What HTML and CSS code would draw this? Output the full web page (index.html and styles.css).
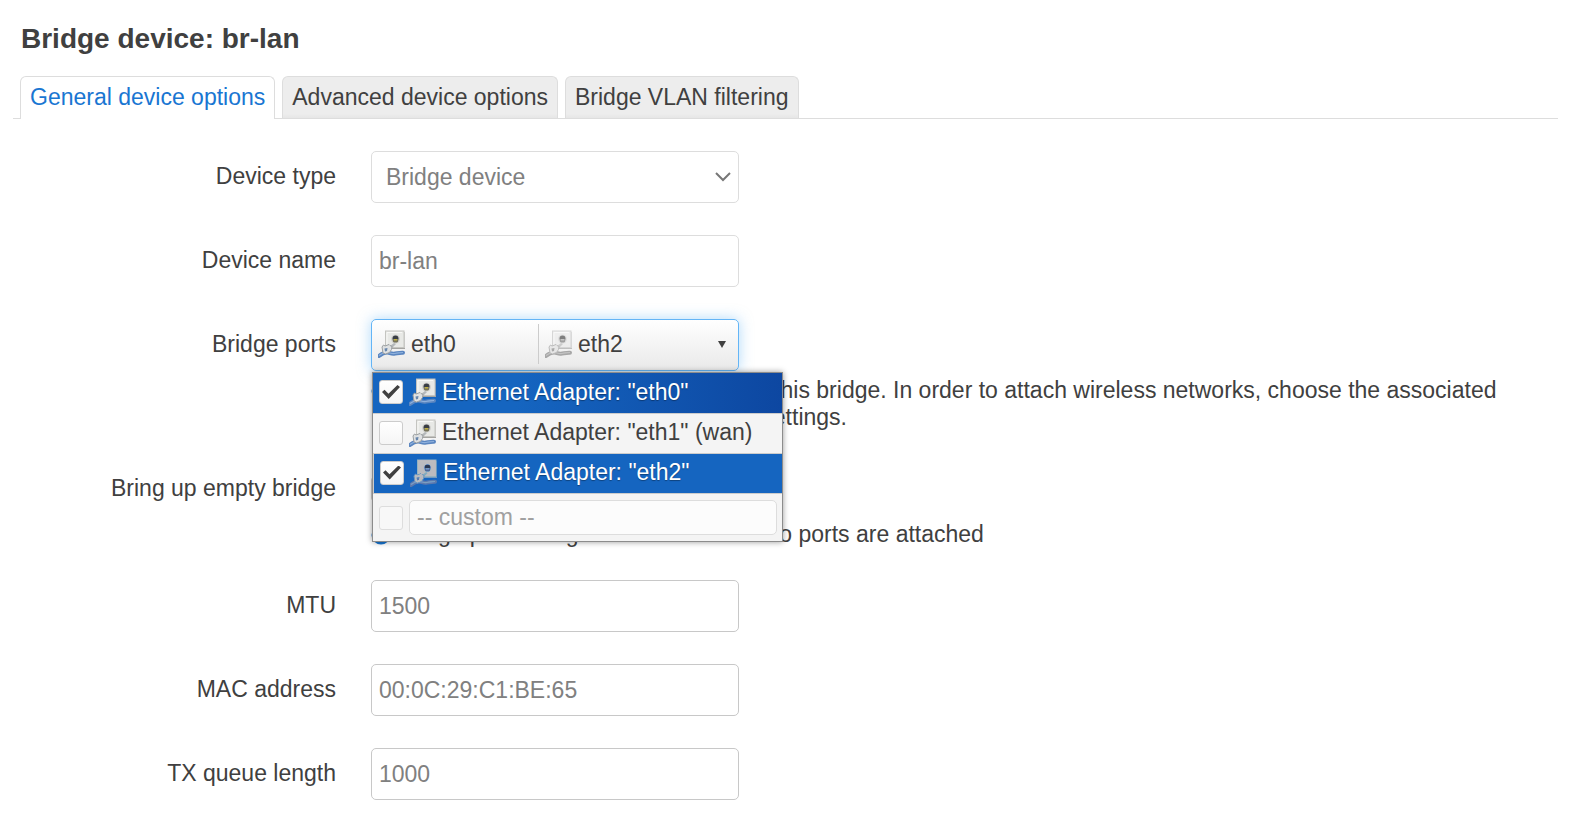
FILE: index.html
```html
<!DOCTYPE html>
<html lang="en">
<head>
<meta charset="utf-8">
<title>Bridge device: br-lan</title>
<link rel="stylesheet" href="styles.css">
</head>
<body>
<svg class="sprites" aria-hidden="true">
  <symbol id="port" viewBox="0 0 27 28">
    <path d="M8 18.500h19V2" fill="none" stroke="#a5a5a2"/>
    <rect x="7.500" y="1" width="18.500" height="16.500" fill="#e8e9e6" stroke="#c4c4c0"/>
    <path d="M9 15.500V2.500h15" fill="none" stroke="#f8f8f6"/>
    <circle cx="17.500" cy="9" r="4.500" fill="#d2d2cf"/>
    <path d="M14.500 8.500a3 3 0 0 1 6 0v1h-6z" fill="#3a3e44"/>
    <path d="M14.500 9.500h6l-.5 2-1 1h-3l-1-1z" fill="#77745a"/>
    <path d="M16 9h3v1.500h-3z" fill="#c0b040"/>
    <path d="M1 26c2.500-2 5-3.500 8-3.500s3.500 1.500 7 1.200c3-.3 5-1.200 9-1" fill="none" stroke="#5b86c0" stroke-width="4" stroke-linecap="round"/>
    <path d="M1 25.500c3-2.500 5-3 8-3s4 1.500 8 1 5-1 8-1" fill="none" stroke="#8fb1dc" stroke-width="1.200"/>
    <path d="M12 16l4-3 2 1-4 4z" fill="#b4b8ba"/>
    <path d="M4 17l1.500-2 1.500 1 4-1.500 1 1 2 1-.5 3-2 3-4 1.500-2.500-1z" fill="#dfe1e2" stroke="#9a9ea0"/>
    <path d="M6.500 18.500l3-.5-.5 3-2 .5z" fill="#6887ac"/>
  </symbol>
  <symbol id="help" viewBox="0 0 20 20">
    <circle cx="10" cy="10" r="9.500" fill="#1976d2"/>
    <path d="M7 8c0-4 6-4 6-.5 0 2-3 2-3 4.500" fill="none" stroke="#fff" stroke-width="2"/>
    <circle cx="10" cy="15" r="1.300" fill="#fff"/>
  </symbol>
</svg>
<main class="modal">
  <h1 class="title">Bridge device: br-lan</h1>
  <nav class="tabs">
    <a class="tab tab-active" href="#general">General device options</a>
    <a class="tab" href="#advanced">Advanced device options</a>
    <a class="tab" href="#vlan">Bridge VLAN filtering</a>
  </nav>
  <form class="form" id="general">
    <div class="row">
      <label class="label" for="type">Device type</label>
      <div class="field select-wrap">
        <select class="control select" id="type" disabled><option>Bridge device</option></select>
        <svg class="chevron" viewBox="0 0 16 10" aria-hidden="true"><path d="M1 1l7 7 7-7" fill="none" stroke="#777" stroke-width="2"/></svg>
      </div>
    </div>
    <div class="row">
      <label class="label" for="name">Device name</label>
      <div class="field"><input class="control" id="name" type="text" value="br-lan" disabled></div>
    </div>
    <div class="row">
      <label class="label" for="ports">Bridge ports</label>
      <div class="field">
        <div class="dropdown">
          <button class="ports" id="ports" type="button" aria-haspopup="true" aria-expanded="true">
            <span class="port"><svg class="port-icon"><use href="#port"/></svg>eth0</span>
            <span class="port port-next"><svg class="port-icon port-down"><use href="#port"/></svg>eth2</span>
            <span class="arrow"></span>
          </button>
          <ul class="menu">
            <li><label class="item item-focus"><input class="check" type="checkbox" checked><svg class="port-icon"><use href="#port"/></svg>Ethernet Adapter: "eth0"</label></li>
            <li><label class="item"><input class="check" type="checkbox"><svg class="port-icon"><use href="#port"/></svg>Ethernet Adapter: "eth1" (wan)</label></li>
            <li><label class="item item-selected"><input class="check" type="checkbox" checked><svg class="port-icon port-tint"><use href="#port"/></svg>Ethernet Adapter: "eth2"</label></li>
            <li class="item item-custom"><input class="check" type="checkbox" aria-label="Custom port"><input class="custom" type="text" placeholder="-- custom --" aria-label="Custom port name"></li>
          </ul>
        </div>
        <div class="help"><svg class="help-icon"><use href="#help"/></svg><span>Specifies the wired ports to attach to this bridge. In order to attach wireless networks, choose the associated interface as network in the wireless settings.</span></div>
      </div>
    </div>
    <div class="row">
      <label class="label" for="empty">Bring up empty bridge</label>
      <div class="field">
        <div class="check-line"><input class="check" id="empty" type="checkbox"></div>
        <div class="help"><svg class="help-icon"><use href="#help"/></svg><span>Bring up the bridge interface even if no ports are attached</span></div>
      </div>
    </div>
    <div class="row">
      <label class="label" for="mtu">MTU</label>
      <div class="field"><input class="control control-open" id="mtu" type="text" placeholder="1500"></div>
    </div>
    <div class="row">
      <label class="label" for="mac">MAC address</label>
      <div class="field"><input class="control control-open" id="mac" type="text" placeholder="00:0C:29:C1:BE:65"></div>
    </div>
    <div class="row">
      <label class="label" for="txq">TX queue length</label>
      <div class="field"><input class="control control-open" id="txq" type="text" placeholder="1000"></div>
    </div>
  </form>
</main>
</body>
</html>
```
FILE: styles.css
```css
* { box-sizing: border-box; }
body {
  margin: 0;
  background: #fff;
  color: #404040;
  font: 23px/27px "Liberation Sans", Arial, sans-serif;
}
input, select, button { font: inherit; color: inherit; margin: 0; }
.sprites { position: absolute; width: 0; height: 0; }
.modal { padding: 20px 14px 20px 13px; }
.title { margin: 0 0 18px 8px; font-size: 28px; line-height: 38px; }
.tabs {
  display: flex;
  gap: 7px;
  padding-left: 7px;
  border-bottom: 1px solid #ddd;
}
.tab {
  height: 42px;
  padding: 7px 9px;
  border: 1px solid #ddd;
  border-bottom: 0;
  border-radius: 6px 6px 0 0;
  background: linear-gradient(#ededed 90%, #e6e6e6);
  color: #404040;
  text-decoration: none;
  white-space: nowrap;
}
.tab-active { margin-bottom: -1px; height: 43px; background: #fff; color: #1976d2; }
.form { display: flex; flex-direction: column; gap: 32px; padding-top: 32px; }
.row { display: grid; grid-template-columns: 323px 1fr; column-gap: 35px; align-items: start; }
.label { padding-top: 12px; text-align: right; }
.control {
  display: block;
  width: 368px;
  height: 52px;
  padding: 0 7px;
  border: 1px solid #ddd;
  border-radius: 5px;
  background: #fff;
  color: #808080;
  opacity: 1;
}
.control-open { border-color: #c8c8c8; }
.control::placeholder { color: #808080; }
.select-wrap { display: grid; grid-template-columns: 368px; align-items: center; }
.select { appearance: none; grid-area: 1 / 1; padding-left: 14px; }
.chevron { grid-area: 1 / 1; justify-self: end; width: 16px; height: 10px; margin-right: 8px; pointer-events: none; }
.dropdown { position: relative; width: 368px; }
.ports {
  display: flex;
  align-items: center;
  width: 100%;
  height: 52px;
  padding: 0 12px 2px 6px;
  border: 1px solid #64b5f6;
  border-radius: 5px;
  background: linear-gradient(#fff, #e9e9e9);
  box-shadow: 0 0 14px rgba(100, 181, 246, .5);
  text-align: left;
}
.port { display: flex; flex: 0 0 160px; align-items: center; gap: 6px; height: 40px; }
.port-next { flex: 1; padding-left: 6px; border-left: 1px solid #ccc; }
.port-icon { flex: none; width: 27px; height: 28px; }
.port-down { filter: grayscale(1); opacity: .65; }
.port-tint { filter: sepia(1) hue-rotate(180deg) saturate(2) brightness(.75); }
.arrow { border: 4px solid transparent; border-top: 7px solid #404040; border-bottom: 0; }
.menu {
  position: absolute;
  z-index: 2;
  top: 53px;
  left: 1px;
  width: 411px;
  margin: 0;
  padding: 0;
  border: 1px solid #8c8c8c;
  background: #f4f4f4;
  box-shadow: 0 0 6px rgba(0, 0, 0, .4);
  list-style: none;
}
.item {
  display: flex;
  align-items: center;
  gap: 6px;
  height: 40px;
  padding: 0 6px 2px;
  border-bottom: 1px solid #ccc;
  white-space: nowrap;
}
.item-focus { height: 41px; background: linear-gradient(90deg, #1565c0 35%, #0d47a1); }
.item-selected { background: #1565c0; border-left: 1px solid #ccc; }
.item-focus, .item-selected { color: #fff; text-shadow: 0 1px 1px rgba(0, 0, 0, .35); }
.item-custom { height: 47px; padding: 0 5px 0 6px; border-bottom: 0; }
.check {
  appearance: none;
  flex: none;
  display: grid;
  place-items: center;
  width: 24px;
  height: 24px;
  border: 1px solid #ccc;
  border-radius: 3px;
  background: linear-gradient(#fff, #f5f5f5);
}
.check:checked::before {
  content: "";
  width: 18px;
  height: 14px;
  background: #404040;
  clip-path: polygon(0 50%, 14% 34%, 36% 62%, 86% 0, 100% 14%, 37% 100%);
}
.item-custom .check { border-color: #ddd; background: #f8f8f8; }
.custom {
  flex: 1;
  min-width: 0;
  height: 35px;
  padding: 0 7px;
  border: 1px solid #ddd;
  border-radius: 5px;
  background: #fcfcfc;
}
.custom::placeholder { color: #a0a0a0; }
.check-line { display: flex; align-items: center; height: 52px; }
.help { display: flex; gap: 6px; margin-top: 6px; }
.help-icon { flex: none; width: 20px; height: 20px; margin-top: 4px; }
```
